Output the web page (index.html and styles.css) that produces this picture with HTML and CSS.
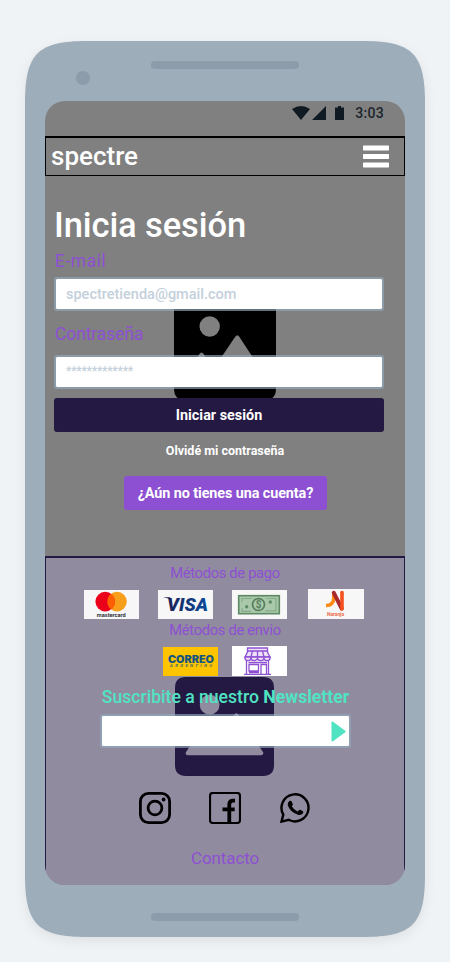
FILE: index.html
```html
<!DOCTYPE html>
<html lang="es">
<head>
<meta charset="utf-8">
<title>spectre</title>
<link rel="stylesheet" href="styles.css">
</head>
<body>
<div class="phone">
  <svg class="shell" viewBox="0 0 400 896"><path d="M0 62C0 12.7 12.7 0 62 0H338C387.3 0 400 12.7 400 62V834C400 883.3 387.3 896 338 896H62C12.7 896 0 883.3 0 834Z" fill="#9eadba"/></svg>
  <div class="bezel-top"><i class="camera"></i><i class="speaker"></i></div>
  <div class="screen">
    <div class="status">
      <svg width="52" height="14" viewBox="0 0 52 14" fill="#101a22"><path d="M0 3Q9-3 18 3L9 14ZM20 14L34 0V14ZM43 1.500H46V0H49V1.500H52V14H43Z"/></svg>
      <span>3:03</span>
    </div>
    <header class="navbar">
      <span class="brand">spectre</span>
      <svg width="26" height="23" viewBox="0 0 26 23" fill="#fff"><rect y=".5" width="26" height="5" rx=".7"/><rect y="9" width="26" height="5" rx=".7"/><rect y="17.5" width="26" height="5" rx=".7"/></svg>
    </header>
    <main class="login">
      <svg class="placeholder" viewBox="0 0 100 100"><path fill-rule="evenodd" d="M11 0H89Q100 0 100 11V89Q100 100 89 100H11Q0 100 0 89V11Q0 0 11 0ZM35 18A10 10 0 1 0 35 38A10 10 0 1 0 35 18ZM13 79H87Q90 78 89 76L64 38Q62 35 60 38L39 69L29 55Q27 52 25 55L11 76Q10 79 13 79Z"/></svg>
      <h1>Inicia sesión</h1>
      <label class="email-label" for="email">E-mail</label>
      <input id="email" class="field" placeholder="spectretienda@gmail.com">
      <label class="pass-label" for="pass">Contraseña</label>
      <input id="pass" class="field pass" type="password" placeholder="*************">
      <button class="submit">Iniciar sesión</button>
      <a class="forgot">Olvidé mi contraseña</a>
      <button class="signup">¿Aún no tienes una cuenta?</button>
    </main>
    <footer class="footer">
      <h2>Métodos de pago</h2>
      <div class="logos pay">
        <svg width="55" height="29" viewBox="0 0 55 29"><path fill="#f7f7f7" d="M0 0H55V29H0Z"/><circle cx="33" cy="11.600" r="9.800" fill="#f79e1b"/><circle cx="21.200" cy="11.600" r="9.800" fill="#eb001b"/><path d="M27.100 3.800A9.800 9.800 0 0 1 27.100 19.400A9.800 9.800 0 0 1 27.100 3.800" fill="#ff5f00"/><text class="t-master" x="12.800" y="26.800" textLength="29" lengthAdjust="spacingAndGlyphs">mastercard</text></svg>
        <svg width="55" height="29" viewBox="0 0 55 29"><defs><linearGradient id="vb"><stop stop-color="#1b2156"/><stop offset="1" stop-color="#0a4b9b"/></linearGradient></defs><path fill="#f7f7f7" d="M0 0H55V29H0Z"/><path d="M5 7.200H12L13 10Q10 7.800 5 7.200Z" fill="#1b2156"/><text class="t-visa" x="9" y="20.600" textLength="41" lengthAdjust="spacingAndGlyphs" fill="url(#vb)">VISA</text></svg>
        <svg width="55" height="29" viewBox="0 0 55 29"><path fill="#f7f7f7" d="M0 0H55V29H0Z"/><rect x="6.700" y="5.700" width="40.600" height="18" fill="#a9c9aa" stroke="#5f8865" stroke-width="1.600"/><path d="M20 8.500H10V12M10 18V21.300H19M34 8.500H44V20.800H33" fill="none" stroke="#86ab89" stroke-width="1.200"/><circle cx="26.500" cy="14.500" r="6" fill="#a9c9aa" stroke="#557e5b" stroke-width="1.700"/><text class="t-dollar" x="26.500" y="18">$</text><circle cx="14.700" cy="16.800" r="1.700" fill="#5f8865"/><circle cx="38.300" cy="12" r="1.700" fill="#5f8865"/></svg>
        <svg class="naranja" width="56" height="30" viewBox="0 0 56 30"><path fill="#f7f7f7" d="M0 0H56V30H0Z"/><path d="M18 16.500Q25.500 16.500 25.800 9V4" fill="none" stroke="#ff8a14" stroke-width="3.600"/><path d="M25.800 3.800L33.700 19.500" stroke="#a82a2a" stroke-width="4" stroke-linecap="round"/><path d="M34 3.500V20" stroke="#f4511e" stroke-width="3.600" stroke-linecap="round"/><text class="t-naranja" x="19" y="26.700" textLength="17" lengthAdjust="spacingAndGlyphs">Naranja</text></svg>
      </div>
      <h2 class="ship-title">Métodos de envio</h2>
      <div class="logos ship">
        <svg width="55" height="29" viewBox="0 0 55 29"><path fill="#ffc400" d="M0 0H55V29H0Z"/><text class="t-correo" x="5" y="16.200" textLength="46" lengthAdjust="spacingAndGlyphs">CORREO</text><text class="t-arg" x="7" y="20.400" textLength="42">ARGENTINO</text></svg>
        <svg width="55" height="30" viewBox="0 0 55 30" fill="none" stroke="#8e50d2" stroke-width="1.300"><path fill="#fff" stroke="none" d="M0 0H55V30H0Z"/><path fill="#eee1fa" d="M15.500 2H35.500V5H15.500ZM16 5H35L38 11H13Z"/><path d="M20.500 5L19 11M25.500 5V11M30.500 5L32 11"/><path fill="#eee1fa" d="M13 11H38V12A3 2.600 0 0 1 32 12A3.250 2.600 0 0 1 25.500 12A3.250 2.600 0 0 1 19 12A3 2.600 0 0 1 13 12ZM19 11V12M25.500 11V12M32 11V12"/><path d="M14.500 15V28M36.500 15V28M12 28.300H39M17 18.500H26.500V25H17ZM29 28V18.500H34.500V28M17 26.500H27M16.500 16.500H35"/></svg>
      </div>
      <div class="newsletter">
        <svg class="placeholder" viewBox="0 0 100 100" fill="#231942"><path fill-rule="evenodd" d="M11 0H89Q100 0 100 11V89Q100 100 89 100H11Q0 100 0 89V11Q0 0 11 0ZM35 18A10 10 0 1 0 35 38A10 10 0 1 0 35 18ZM13 79H87Q90 78 89 76L64 38Q62 35 60 38L39 69L29 55Q27 52 25 55L11 76Q10 79 13 79Z"/></svg>
        <p>Suscribite a nuestro <b>Newsletter</b></p>
        <div class="subscribe"><input aria-label="Newsletter"><svg width="15" height="21" viewBox="0 0 15 21"><path d="M.5 1.200Q.5 0 1.700.6L14.200 9.700Q15 10.500 14.200 11.300L1.700 20.400Q.5 21 .5 19.800Z" fill="#50e3c2"/></svg></div>
      </div>
      <div class="social">
        <svg width="32" height="32" viewBox="0 0 32 32" fill="none" stroke="#000"><rect x="1.400" y="1.400" width="29.200" height="29.200" rx="8" stroke-width="2.800"/><circle cx="16" cy="16" r="6.900" stroke-width="2.800"/><circle cx="24.600" cy="7.500" r="1.900" fill="#000" stroke="none"/></svg>
        <svg width="32" height="32" viewBox="0 0 32 32" fill="none" stroke="#000"><rect x="1" y="1" width="30" height="30" rx="2.800" stroke-width="2.200"/><path d="M20.300 31V12.500Q20.300 8.700 24 8.700H26M13.500 17.300H25.700" stroke-width="3.800"/></svg>
        <svg class="wa" width="30" height="30" viewBox="0 0 30 30"><path d="M1.500 28.600L3.300 21.600A13.500 13.500 0 1 1 8.700 26.800Z" fill="none" stroke="#000" stroke-width="2.400"/><path d="M9.700 7.800Q11.200 7.400 11.800 8.700L12.800 11.200Q13 12.200 11.800 13.300Q13.700 17 17.500 18.400L19.300 16.900Q20 16.500 20.800 17L23.200 18.500Q23.600 19 22.800 20.600Q21.300 22.500 18.600 21.900Q10 19.500 7.700 12Q7.500 9.300 9.700 7.800Z"/></svg>
      </div>
      <a class="contact">Contacto</a>
    </footer>
  </div>
  <div class="bezel-bottom"><i class="speaker"></i></div>
</div>
</body>
</html>
```
FILE: styles.css
```css
* { box-sizing: border-box; }
body {
  margin: 0;
  padding: 41px 25px 25px;
  background: #eff3f6;
  font-family: Roboto, sans-serif;
}
.phone {
  position: relative;
  width: 400px;
  height: 896px;
  padding: 0 20px;
}
.shell {
  position: absolute;
  left: 0;
  top: 0;
  width: 400px;
  height: 896px;
  filter: drop-shadow(0 4px 6px rgba(0, 0, 0, .07));
}
.bezel-top {
  position: relative;
  height: 60px;
  padding: 20px 0 0 31px;
  display: flex;
}
.speaker {
  width: 148px;
  height: 8px;
  border-radius: 4px;
  background: #8d9cab;
}
.camera {
  width: 14px;
  height: 14px;
  margin: 10px 61px 0 0;
  border-radius: 50%;
  background: #8d9cab;
}
.bezel-bottom {
  position: relative;
  display: flex;
  justify-content: center;
  padding-top: 28px;
}
.bezel-bottom .speaker { margin-right: 1px; }
.screen {
  position: relative;
  width: 360px;
  height: 784px;
  border-radius: 20px;
  overflow: hidden;
  background: #808080;
}
.status {
  height: 35px;
  padding: 5px 21px 0 0;
  display: flex;
  justify-content: flex-end;
  gap: 11px;
  font-size: 14px;
  line-height: 15px;
  font-weight: 500;
  letter-spacing: .3px;
  color: #1b252d;
}
.navbar {
  height: 40px;
  border: 1px solid #000;
  border-top-width: 2px;
  padding: 0 15px 0 5px;
  display: flex;
  align-items: center;
  justify-content: space-between;
  color: #fff;
}
.brand {
  margin-top: -2px;
  font-size: 26px;
  font-weight: 500;
  line-height: 36px;
}
.login {
  position: relative;
  height: 380px;
  padding: 29px 21px 0 9px;
  display: flex;
  flex-direction: column;
}
.placeholder { position: absolute; }
.login .placeholder {
  left: 129px;
  top: 122px;
  width: 102px;
  height: 102px;
}
.login > :not(.placeholder) { position: relative; }
h1 {
  margin: 0 0 4px;
  font-size: 34.5px;
  line-height: 40px;
  font-weight: 500;
  letter-spacing: -.1px;
  color: #fff;
}
label {
  margin-left: 1px;
  font-size: 17.5px;
  line-height: 24px;
  color: #8e50d2;
}
.email-label { letter-spacing: .5px; }
.pass-label { margin-top: 11px; letter-spacing: -.1px; }
input {
  width: 100%;
  height: 34px;
  margin: 0;
  padding: 0 10px;
  border: 2px solid rgba(146, 168, 188, .67);
  border-radius: 3px;
  background: #fff padding-box;
  font: 500 14.5px Roboto, sans-serif;
  outline: none;
}
input::placeholder {
  color: #c4d0db;
  opacity: 1;
}
.field { margin-top: 4px; }
.pass { margin-top: 9px; padding-bottom: 4px; }
.pass::placeholder {
  font-size: 12px;
  font-weight: 700;
  letter-spacing: -.3px;
}
button {
  height: 34px;
  border: 0;
  border-radius: 3px;
  padding: 0;
  font: 700 14.4px Roboto, sans-serif;
  color: #fff;
}
.submit {
  margin-top: 9px;
  background: #231942;
}
.forgot {
  margin: 11px 0 0 12px;
  text-align: center;
  font-size: 12.5px;
  line-height: 16px;
  font-weight: 700;
  color: #fff;
}
.signup {
  width: 203px;
  margin: 17px 0 0 70px;
  letter-spacing: -.1px;
  background: #8e50d2;
}
.footer {
  height: 329px;
  padding-top: 6px;
  border: solid #231942;
  border-width: 2px 1px 0;
  background: #918ba0;
}
h2 {
  margin: 0;
  text-align: center;
  font-size: 14.8px;
  line-height: 18px;
  font-weight: 400;
  letter-spacing: -.35px;
  color: #8e50d2;
}
.logos { display: flex; }
.pay {
  height: 39px;
  padding: 8px 0 0 38px;
  gap: 19px;
}
.naranja { margin: -1px 0 0 2px; }
.ship {
  height: 37px;
  padding: 7px 0 0 117px;
  gap: 14px;
}
.ship > :first-child { margin-top: 1px; }
.newsletter {
  position: relative;
  margin: 0 53px 0 54px;
  padding-top: 9px;
}
.newsletter .placeholder {
  left: 75px;
  top: 1px;
  width: 99px;
  height: 99px;
}
.newsletter p {
  position: relative;
  margin: 0 0 5px;
  font-size: 17.6px;
  line-height: 24px;
  font-weight: 500;
  text-align: center;
  white-space: nowrap;
  color: #50e3c2;
}
.subscribe {
  position: relative;
  display: flex;
}
.subscribe svg {
  position: absolute;
  right: 5px;
  top: 7px;
}
.social {
  display: flex;
  padding: 44px 0 0 93px;
  gap: 38px;
}
.wa { margin: 1px 0 0 1px; }
.contact {
  display: block;
  margin: 22px 0 0;
  text-align: center;
  font-size: 17px;
  line-height: 24px;
  letter-spacing: -.1px;
  color: #8e50d2;
}
.t-master { font: 700 5.5px Roboto; fill: #30343c; }
.t-visa { font: italic 900 18.5px Roboto; }
.t-dollar { font: 700 10px Roboto; text-anchor: middle; fill: #557e5b; }
.t-naranja { font: 700 4.5px Roboto; fill: #f06a48; }
.t-correo { font: 900 10px Inter; fill: #16557f; }
.t-arg { font: italic 700 4.2px Roboto; fill: #3d6c6a; }
```
